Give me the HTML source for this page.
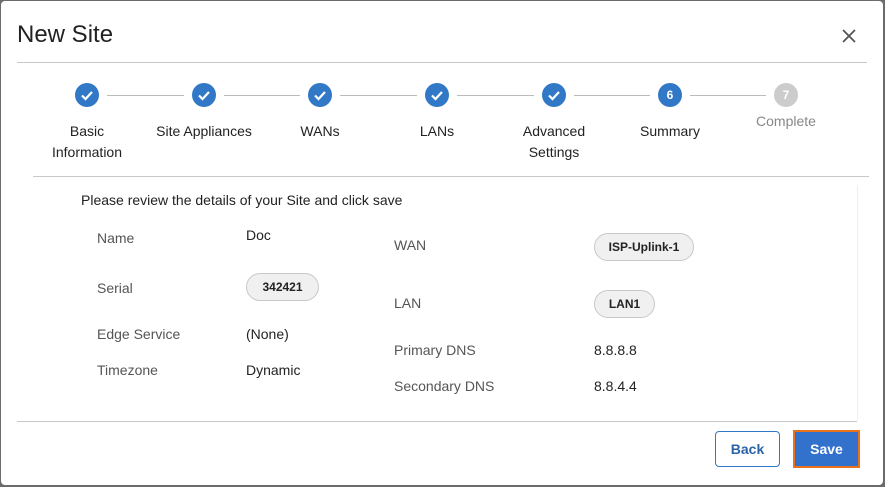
<!DOCTYPE html>
<html><head><style>
body{margin:0;width:885px;height:487px;background:#6b6b6b;font-family:"Liberation Sans",Arial,sans-serif;overflow:hidden;position:relative}
.d{position:absolute;left:1px;top:1px;width:882px;height:484px;background:#fff;border-radius:4px}
.a{position:absolute;white-space:nowrap}
.t{left:17px;top:21px;font-size:24px;color:#222}
.hl{position:absolute;height:1px;background:#c8c8c8}
.c{position:absolute;width:24px;height:24px;border-radius:50%;background:#3178c6;top:83px;color:#fff;font-size:12px;text-align:center;line-height:24px;font-weight:bold}
.c svg{position:absolute;left:0;top:0}
.ln{position:absolute;top:95px;height:1px;background:#bbb}
.lb{position:absolute;font-size:14px;color:#222;text-align:center;width:120px;line-height:21px;top:121px}
.k{font-size:14px;color:#555}
.v{font-size:14px;color:#222}
.chip{position:absolute;border:1px solid #c8c8c8;background:#f0f0f0;border-radius:14px;font-size:12px;font-weight:bold;color:#222;text-align:center;line-height:26px;height:26px}
</style></head><body>
<div class="d"></div>
<div class="a t">New Site</div>
<svg class="a" style="left:842px;top:29px" width="14" height="14"><path d="M1 1L13 13M13 1L1 13" stroke="#555" stroke-width="1.8"/></svg>
<div class="hl" style="left:17px;top:62px;width:850px"></div>
<div class="c" style="left:75px"><svg width="24" height="24"><path d="M7 12.5l3.5 3.5 6.5-7" stroke="#fff" stroke-width="2.2" fill="none"/></svg></div>
<div class="c" style="left:192px"><svg width="24" height="24"><path d="M7 12.5l3.5 3.5 6.5-7" stroke="#fff" stroke-width="2.2" fill="none"/></svg></div>
<div class="c" style="left:308px"><svg width="24" height="24"><path d="M7 12.5l3.5 3.5 6.5-7" stroke="#fff" stroke-width="2.2" fill="none"/></svg></div>
<div class="c" style="left:425px"><svg width="24" height="24"><path d="M7 12.5l3.5 3.5 6.5-7" stroke="#fff" stroke-width="2.2" fill="none"/></svg></div>
<div class="c" style="left:542px"><svg width="24" height="24"><path d="M7 12.5l3.5 3.5 6.5-7" stroke="#fff" stroke-width="2.2" fill="none"/></svg></div>
<div class="c" style="left:658px">6</div>
<div class="c" style="left:774px;background:#ccc">7</div>
<div class="ln" style="left:107px;width:77px"></div>
<div class="ln" style="left:224px;width:76px"></div>
<div class="ln" style="left:340px;width:77px"></div>
<div class="ln" style="left:457px;width:77px"></div>
<div class="ln" style="left:574px;width:76px"></div>
<div class="ln" style="left:690px;width:76px"></div>
<div class="lb" style="left:27px">Basic<br>Information</div>
<div class="lb" style="left:144px">Site Appliances</div>
<div class="lb" style="left:260px">WANs</div>
<div class="lb" style="left:377px">LANs</div>
<div class="lb" style="left:494px">Advanced<br>Settings</div>
<div class="lb" style="left:610px">Summary</div>
<div class="lb" style="left:726px;top:111px;color:#888">Complete</div>
<div class="hl" style="left:33px;top:176px;width:836px"></div>
<div class="hl" style="left:857px;top:185px;width:1px;height:236px;background:#eee"></div>
<div class="a v" style="left:81px;top:192px">Please review the details of your Site and click save</div>
<div class="a k" style="left:97px;top:230px">Name</div>
<div class="a v" style="left:246px;top:227px">Doc</div>
<div class="a k" style="left:97px;top:280px">Serial</div>
<div class="chip" style="left:246px;top:273px;width:71px">342421</div>
<div class="a k" style="left:97px;top:326px">Edge Service</div>
<div class="a v" style="left:246px;top:326px">(None)</div>
<div class="a k" style="left:97px;top:362px">Timezone</div>
<div class="a v" style="left:246px;top:362px">Dynamic</div>
<div class="a k" style="left:394px;top:237px">WAN</div>
<div class="chip" style="left:594px;top:233px;width:98px">ISP-Uplink-1</div>
<div class="a k" style="left:394px;top:295px">LAN</div>
<div class="chip" style="left:594px;top:290px;width:59px">LAN1</div>
<div class="a k" style="left:394px;top:342px">Primary DNS</div>
<div class="a v" style="left:594px;top:342px">8.8.8.8</div>
<div class="a k" style="left:394px;top:378px">Secondary DNS</div>
<div class="a v" style="left:594px;top:378px">8.8.4.4</div>
<div class="hl" style="left:17px;top:421px;width:840px"></div>
<div class="a" style="left:715px;top:431px;width:63px;height:34px;border:1px solid #3178c6;border-radius:4px;color:#2a63a8;font-size:14px;font-weight:bold;text-align:center;line-height:34px">Back</div>
<div class="a" style="left:793px;top:430px;width:63px;height:34px;border:2px solid #e8731c;background:#3372cc;color:#fff;font-size:14px;font-weight:bold;text-align:center;line-height:34px">Save</div>
</body></html>
